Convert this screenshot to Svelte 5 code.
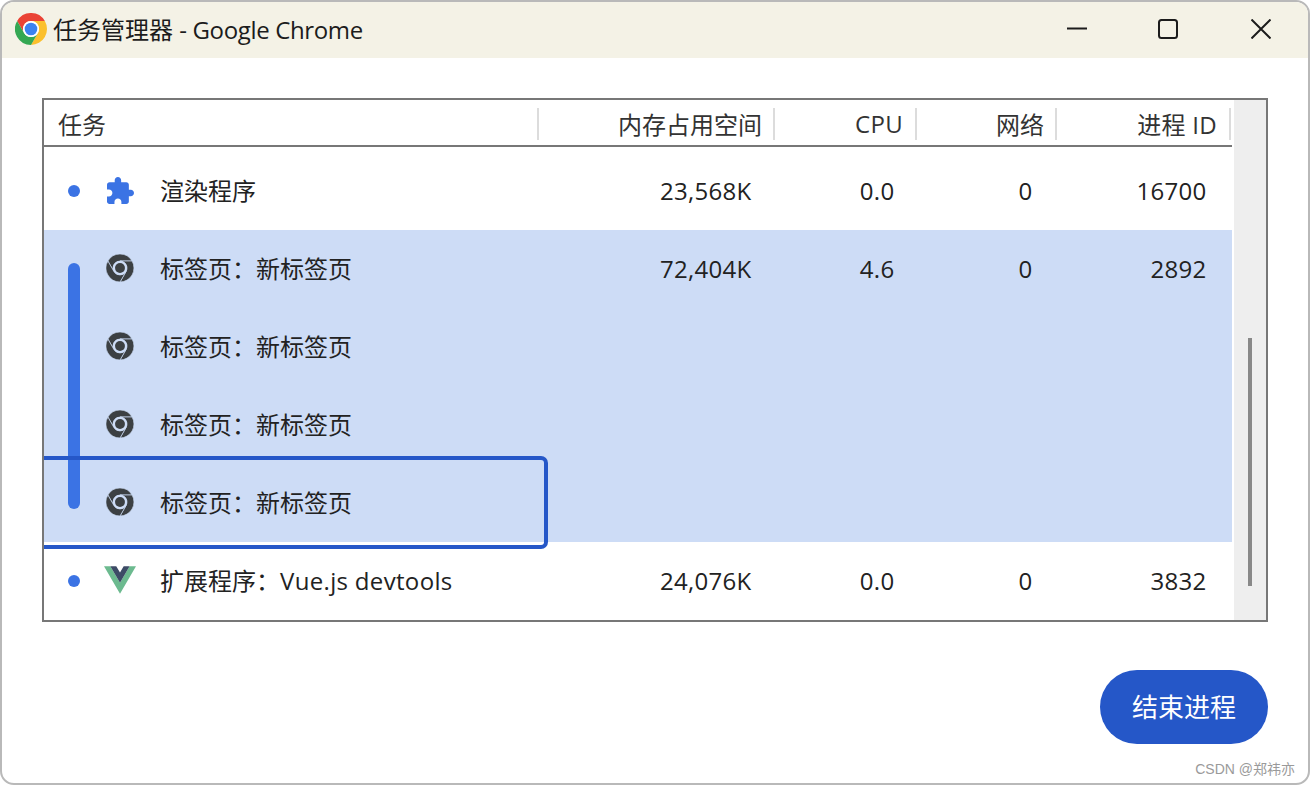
<script>
  const columns = [
    { label: '任务', cls: 'task' },
    { label: '内存占用空间', cls: 'mem' },
    { label: 'CPU', cls: 'cpu' },
    { label: '网络', cls: 'net' },
    { label: '进程 ID', cls: 'pid' }
  ];

  const rows = [
    { icon: 'puzzle', dot: true, name: '渲染程序', mem: '23,568K', cpu: '0.0', net: '0', pid: '16700' },
    { icon: 'chrome', selected: true, name: '标签页：新标签页', mem: '72,404K', cpu: '4.6', net: '0', pid: '2892' },
    { icon: 'chrome', selected: true, name: '标签页：新标签页' },
    { icon: 'chrome', selected: true, name: '标签页：新标签页' },
    { icon: 'chrome', selected: true, name: '标签页：新标签页' },
    { icon: 'vue', dot: true, name: '扩展程序：', latin: 'Vue.js devtools', mem: '24,076K', cpu: '0.0', net: '0', pid: '3832' }
  ];

  const red = 'M3.2 12A24 24 0 0 1 44.78 12H24A12 12 0 0 0 13.6 30Z';
  const yellow = 'M44.78 12A24 24 0 0 1 24 48L34.39 30A12 12 0 0 0 24 12Z';
  const green = 'M24 48A24 24 0 0 1 3.2 12L13.6 30A12 12 0 0 0 34.39 30Z';
</script>

<div class="window">
  <header class="titlebar">
    <svg class="logo" viewBox="0 0 48 48">
      <path d={red} fill="#ea4335" />
      <path d={yellow} fill="#fbc02d" />
      <path d={green} fill="#34a853" />
      <circle cx="24" cy="24" r="12" fill="#fff" />
      <circle cx="24" cy="24" r="9.5" fill="#3b82f0" />
    </svg>
    <span class="title">任务管理器 <span class="app">- Google Chrome</span></span>
    <div class="controls">
      <svg viewBox="0 0 20 20"><path d="M0 9.5H20" /></svg>
      <svg viewBox="0 0 20 20"><rect x="1" y="1" width="18" height="18" rx="2.5" /></svg>
      <svg viewBox="0 0 20 20"><path d="M0.5 0.5L19.5 19.5M19.5 0.5L0.5 19.5" /></svg>
    </div>
  </header>

  <main class="content">
    <div class="table">
      <div class="list">
        <div class="head">
          {#each columns as col}
            <div class="th {col.cls}"><span>{col.label}</span></div>
          {/each}
        </div>
        <div class="body">
          {#each rows as row}
            <div class="row" class:selected={row.selected}>
              <div class="name">
                <span class="marker">
                  {#if row.dot}<i class="dot"></i>{/if}
                </span>
                <span class="icon">
                  {#if row.icon === 'puzzle'}
                    <svg class="puzzle" viewBox="2 1 21 21">
                      <path fill="#3b73e4" d="M20.5 11H19V7c0-1.1-.9-2-2-2h-4V3.5C13 2.12 11.88 1 10.5 1S8 2.12 8 3.5V5H4c-1.1 0-1.99.9-1.99 2v3.8H3.5c1.49 0 2.7 1.21 2.7 2.7s-1.21 2.7-2.7 2.7H2V20c0 1.1.9 2 2 2h3.8v-1.5c0-1.49 1.21-2.7 2.7-2.7 1.49 0 2.7 1.21 2.7 2.7V22H17c1.1 0 2-.9 2-2v-4h1.5c1.38 0 2.5-1.12 2.5-2.5S21.88 11 20.5 11z" />
                    </svg>
                  {:else if row.icon === 'chrome'}
                    <svg class="chrome" viewBox="0 0 48 48">
                      <g fill="#3c4043" stroke="#cddcf6" stroke-width="1.2">
                        <path d={red} />
                        <path d={yellow} />
                        <path d={green} />
                      </g>
                      <circle cx="24" cy="24" r="12" fill="#cddcf6" />
                      <circle cx="24" cy="24" r="8.5" fill="#3c4043" />
                    </svg>
                  {:else}
                    <svg class="vue" viewBox="0 0 256 221">
                      <path fill="#6cba8f" d="M0 0l128 220.8L256 0h-51.2L128 132.48 50.56 0H0z" />
                      <path fill="#3d4b66" d="M50.56 0L128 133.12 204.8 0h-47.36L128 51.2 97.92 0H50.56z" />
                    </svg>
                  {/if}
                </span>
                <span class="label">{row.name}{#if row.latin}<span class="latin">{row.latin}</span>{/if}</span>
              </div>
              <div class="td mem">{row.mem ?? ''}</div>
              <div class="td cpu">{row.cpu ?? ''}</div>
              <div class="td net">{row.net ?? ''}</div>
              <div class="td pid">{row.pid ?? ''}</div>
            </div>
          {/each}
        </div>
        <div class="group-bar"></div>
        <div class="focus-ring"></div>
      </div>
      <div class="scrollbar"><div class="thumb"></div></div>
    </div>

    <div class="actions">
      <button class="end">结束进程</button>
    </div>
  </main>

  <div class="watermark">CSDN @郑祎亦</div>
</div>

<style>
  :global(body) {
    margin: 0;
    background: #fff;
  }

  .window {
    position: relative;
    box-sizing: border-box;
    width: 1310px;
    height: 785px;
    display: flex;
    flex-direction: column;
    border: 2px solid #b9b9b9;
    border-radius: 14px;
    overflow: hidden;
    background: #fff;
    color: #222;
    font-family: "Open Sans", "Noto Sans CJK SC", sans-serif;
    font-size: 24px;
  }

  .titlebar {
    height: 56px;
    flex: none;
    display: flex;
    align-items: center;
    padding: 0 37px 2px 13px;
    box-sizing: border-box;
    background: #f4f2e6;
    color: #1c1c1c;
  }

  .logo {
    width: 32px;
    height: 32px;
    margin-right: 6px;
  }

  .title {
    padding-bottom: 2px;
  }

  .app {
    letter-spacing: -0.35px;
  }

  .controls {
    margin-left: auto;
    display: flex;
    gap: 71px;
  }

  .controls svg {
    width: 20px;
    height: 20px;
    fill: none;
    stroke: #1c1c1c;
    stroke-width: 2;
  }

  .controls svg:last-child {
    margin-left: 2px;
  }

  .content {
    flex: 1;
    padding: 40px 40px 0;
  }

  .table {
    height: 524px;
    box-sizing: border-box;
    display: flex;
    border: 2px solid #777;
  }

  .list {
    position: relative;
    width: 1188px;
  }

  .head {
    display: grid;
    grid-template-columns: 495px 236px 142px 140px 174px;
    height: 45px;
    border-bottom: 2px solid #777;
  }

  .th {
    height: 32px;
    margin-top: 8px;
    display: flex;
    align-items: center;
    justify-content: flex-end;
    padding-right: 12px;
    padding-bottom: 2px;
    border-right: 2px solid #dcdcdc;
    color: #333;
    box-sizing: border-box;
    letter-spacing: 0.3px;
  }

  .th.mem,
  .th.net {
    padding-right: 11px;
    letter-spacing: 0;
  }

  .th.task {
    justify-content: flex-start;
    padding-left: 14px;
    letter-spacing: 0;
  }

  .body {
    padding-top: 5px;
  }

  .row {
    display: grid;
    grid-template-columns: 494px 236px 142px 140px 174px;
    height: 78px;
    align-items: center;
  }

  .row.selected {
    background: #cddcf6;
  }

  .name {
    display: flex;
    align-items: center;
  }

  .marker {
    width: 60px;
    display: flex;
    justify-content: center;
  }

  .dot {
    width: 12px;
    height: 12px;
    border-radius: 50%;
    background: #3b73e4;
  }

  .icon {
    width: 56px;
    display: flex;
    align-items: center;
  }

  .label {
    padding-bottom: 4px;
  }

  .latin {
    letter-spacing: 0.33px;
  }

  .puzzle {
    width: 27px;
    height: 27px;
    margin: -1px 0 0 3px;
  }

  .chrome {
    width: 28px;
    height: 28px;
    margin: -2px 0 0 2px;
  }

  .vue {
    width: 32px;
    height: 28px;
    margin-top: -3px;
  }

  .td {
    text-align: right;
    padding-right: 22.5px;
    padding-bottom: 2px;
    letter-spacing: 0.3px;
  }

  .td.net,
  .td.pid {
    padding-right: 23.5px;
  }

  .td.cpu {
    padding-right: 21.5px;
  }

  .group-bar {
    position: absolute;
    left: 24px;
    top: 163px;
    width: 12px;
    height: 246px;
    border-radius: 6px;
    background: #3b73e4;
  }

  .focus-ring {
    position: absolute;
    left: 0;
    top: 356px;
    width: 504px;
    height: 93px;
    box-sizing: border-box;
    border: 4px solid #2557c8;
    border-left: 0;
    border-radius: 0 7px 7px 0;
  }

  .scrollbar {
    position: relative;
    width: 32px;
    margin-left: 2px;
    background: #eee;
  }

  .thumb {
    position: absolute;
    left: 14px;
    top: 238px;
    width: 4px;
    height: 248px;
    background: #888;
  }

  .actions {
    display: flex;
    justify-content: flex-end;
    margin-top: 48px;
  }

  .end {
    width: 168px;
    height: 74px;
    border: 0;
    border-radius: 37px;
    padding: 0 0 2px;
    background: #2557c8;
    color: #fff;
    font: inherit;
    font-size: 26px;
  }

  .watermark {
    position: absolute;
    right: 13px;
    bottom: 5px;
    font-size: 14px;
    line-height: 18px;
    color: #9a9a9a;
    font-family: "Liberation Sans", "Noto Sans CJK SC", sans-serif;
  }
</style>
